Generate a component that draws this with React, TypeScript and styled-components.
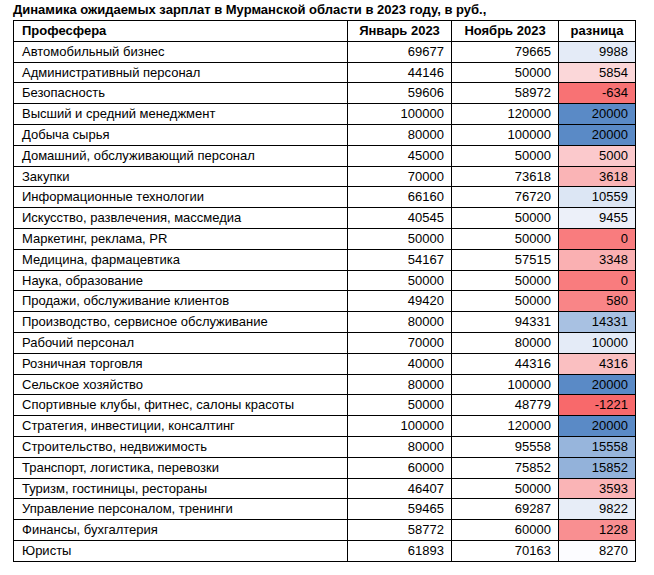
import React from "react";
import styled, { createGlobalStyle } from "styled-components";

const GlobalStyle = createGlobalStyle`
  html, body { margin: 0; padding: 0; background: #ffffff; }
  body { font-family: "Liberation Sans", Arial, sans-serif; color: #000; }
`;

const Page = styled.div`
  padding: 2px 0 0 13px;
`;

const Title = styled.div`
  font-weight: bold;
  font-size: 13px;
  line-height: 16px;
  height: 18px;
  white-space: nowrap;
`;

const Table = styled.table`
  border-collapse: collapse;
  table-layout: fixed;
  width: 623px;
  font-size: 13px;
`;

const HeadCell = styled.th<{ $align?: string }>`
  border: 1px solid #000;
  font-weight: bold;
  text-align: ${(p) => p.$align || "center"};
  padding: 2px 8px 2.8px 8px;
  line-height: 15px;
  height: 15px;
  white-space: nowrap;
`;

const Cell = styled.td<{ $num?: boolean }>`
  border: 1px solid #000;
  text-align: ${(p) => (p.$num ? "right" : "left")};
  padding: ${(p) => (p.$num ? "2px 7px 2.8px 4px" : "2px 4px 2.8px 8px")};
  line-height: 15px;
  height: 15px;
  white-space: nowrap;
`;

const rows: [string, number, number, number][] = [
  ["Автомобильный бизнес", 69677, 79665, 9988],
  ["Административный персонал", 44146, 50000, 5854],
  ["Безопасность", 59606, 58972, -634],
  ["Высший и средний менеджмент", 100000, 120000, 20000],
  ["Добыча сырья", 80000, 100000, 20000],
  ["Домашний, обслуживающий персонал", 45000, 50000, 5000],
  ["Закупки", 70000, 73618, 3618],
  ["Информационные технологии", 66160, 76720, 10559],
  ["Искусство, развлечения, массмедиа", 40545, 50000, 9455],
  ["Маркетинг, реклама, PR", 50000, 50000, 0],
  ["Медицина, фармацевтика", 54167, 57515, 3348],
  ["Наука, образование", 50000, 50000, 0],
  ["Продажи, обслуживание клиентов", 49420, 50000, 580],
  ["Производство, сервисное обслуживание", 80000, 94331, 14331],
  ["Рабочий персонал", 70000, 80000, 10000],
  ["Розничная торговля", 40000, 44316, 4316],
  ["Сельское хозяйство", 80000, 100000, 20000],
  ["Спортивные клубы, фитнес, салоны красоты", 50000, 48779, -1221],
  ["Стратегия, инвестиции, консалтинг", 100000, 120000, 20000],
  ["Строительство, недвижимость", 80000, 95558, 15558],
  ["Транспорт, логистика, перевозки", 60000, 75852, 15852],
  ["Туризм, гостиницы, рестораны", 46407, 50000, 3593],
  ["Управление персоналом, тренинги", 59465, 69287, 9822],
  ["Финансы, бухгалтерия", 58772, 60000, 1228],
  ["Юристы", 61893, 70163, 8270],
];

const RED = [248, 105, 107];
const WHITE = [252, 252, 255];
const BLUE = [90, 138, 198];

const diffs = rows.map((r) => r[3]);
const sorted = [...diffs].sort((a, b) => a - b);
const MIN = sorted[0];
const MAX = sorted[sorted.length - 1];
const MID = sorted[Math.floor(sorted.length / 2)];

function mix(a: number[], b: number[], t: number) {
  const c = a.map((x, i) => Math.round(x + (b[i] - x) * t));
  return `rgb(${c[0]}, ${c[1]}, ${c[2]})`;
}

function scale(v: number) {
  if (v <= MID) return mix(RED, WHITE, (v - MIN) / (MID - MIN));
  return mix(WHITE, BLUE, (v - MID) / (MAX - MID));
}

export default function App() {
  return (
    <>
      <GlobalStyle />
      <Page>
        <Title>Динамика ожидаемых зарплат в Мурманской области в 2023 году, в руб.,</Title>
        <Table>
          <colgroup>
            <col style={{ width: 334 }} />
            <col style={{ width: 104 }} />
            <col style={{ width: 107 }} />
            <col style={{ width: 77 }} />
          </colgroup>
          <thead>
            <tr>
              <HeadCell $align="left">Професфера</HeadCell>
              <HeadCell>Январь 2023</HeadCell>
              <HeadCell>Ноябрь 2023</HeadCell>
              <HeadCell>разница</HeadCell>
            </tr>
          </thead>
          <tbody>
            {rows.map(([name, jan, nov, diff]) => (
              <tr key={name}>
                <Cell>{name}</Cell>
                <Cell $num>{jan}</Cell>
                <Cell $num>{nov}</Cell>
                <Cell $num style={{ background: scale(diff) }}>
                  {diff}
                </Cell>
              </tr>
            ))}
          </tbody>
        </Table>
      </Page>
    </>
  );
}
